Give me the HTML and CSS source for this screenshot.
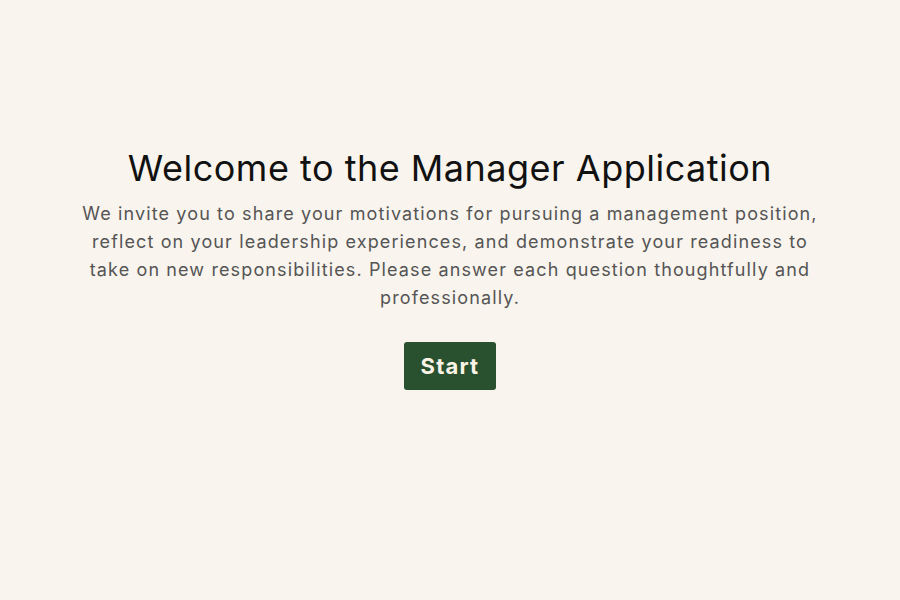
FILE: index.html
```html
<!DOCTYPE html>
<html lang="en">
<head>
  <meta charset="UTF-8" />
  <meta name="viewport" content="width=device-width, initial-scale=1.0" />
  <title>Manager Application</title>
  <link rel="stylesheet" href="styles.css">
</head>
<body>
  <main class="intro">
    <h1>Welcome to the Manager Application</h1>
    <p>We invite you to share your motivations for pursuing a management position, reflect on your leadership experiences, and demonstrate your readiness to take on new responsibilities. Please answer each question thoughtfully and professionally.</p>
    <button class="start-btn">Start</button>
  </main>
</body>
</html>
```

FILE: styles.css
```css
body {
  margin: 0;
  font-family: 'Inter', 'DejaVu Sans', sans-serif;
  background-color: #f9f4ed;
  color: #111;
}
.intro {
  max-width: 770px;
  margin: 0 auto;
  padding-top: 144px;
  text-align: center;
}
.intro h1 {
  margin: 0 0 8px;
  font-size: 36px;
  font-weight: 400;
  line-height: 48px;
  letter-spacing: 0.5px;
}
.intro p {
  max-width: 752px;
  margin: 0 auto 30px;
  font-size: 18px;
  line-height: 28px;
  letter-spacing: 1.12px;
  color: #555;
}
.start-btn {
  background-color: #29502f;
  color: #fbf4e6;
  border: none;
  border-radius: 3px;
  padding: 0 17px;
  height: 48px;
  font-family: inherit;
  font-size: 22px;
  font-weight: 700;
  letter-spacing: 1.2px;
  cursor: pointer;
}
```
